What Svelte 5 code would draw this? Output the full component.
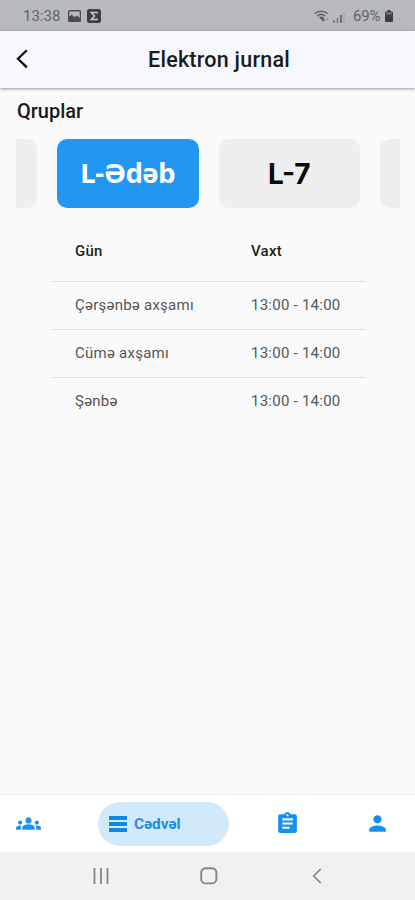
<script>
	let selected = $state('L-Ədəb');

	const groups = ['L-Ədəb', 'L-7'];

	const lessons = [
		{ day: 'Çərşənbə axşamı', time: '13:00 - 14:00' },
		{ day: 'Cümə axşamı', time: '13:00 - 14:00' },
		{ day: 'Şənbə', time: '13:00 - 14:00' }
	];
</script>

<div class="screen">
	<div class="status-bar">
		<span class="clock">13:38</span>
		<svg class="picture" width="13" height="12" viewBox="0 0 13 12">
			<path fill="#4b4c50" fill-rule="evenodd" d="M1.5 0h10A1.5 1.5 0 0 1 13 1.5v9a1.5 1.5 0 0 1-1.5 1.5h-10A1.5 1.5 0 0 1 0 10.5v-9A1.5 1.5 0 0 1 1.5 0zM1.3 1.5v5l2.500-2 2.700 2.700 2.300-1.700 2.900 2.500V1.500z" />
		</svg>
		<svg class="app-badge" width="14" height="14" viewBox="0 0 14 14">
			<rect width="14" height="14" rx="2.5" fill="#3d3e42" />
			<path d="M10 4.600V3.500H4.300L7.500 7l-3.200 3.500H10V9.400" fill="none" stroke="#c9cacd" stroke-width="1.5" />
		</svg>
		<svg class="wifi" width="16" height="13" viewBox="0 0 16 13">
			<path d="M.8 3.700C4.500.3 10 .3 13.700 3.700M3.200 6c2.500-2 5.600-2 8 0" fill="none" stroke="#626367" stroke-width="1.5" />
			<path d="M4.800 7.200c1.600-1 3.400-1 5 0l1 3-1.500 1.500z" fill="#626367" />
			<path d="M11.500 9.500 13 8l1.500 1.500L13 11z" fill="#98999d" />
		</svg>
		<svg class="signal" width="12" height="12" viewBox="0 0 12 12">
			<path d="M1 9v3M4.500 7v5" stroke="#75767a" stroke-width="1.6" />
			<path d="M8 4v8" stroke="#626367" stroke-width="1.8" />
			<path d="M11 1v11" stroke="#a5a6aa" stroke-width="1.5" />
		</svg>
		<span class="percent">69%</span>
		<svg class="battery" width="8" height="12" viewBox="0 0 8 12">
			<path fill="#3d3e42" d="M2.500 0h3v1.500H7a1 1 0 0 1 1 1V11a1 1 0 0 1-1 1H1a1 1 0 0 1-1-1V2.500a1 1 0 0 1 1-1h1.500z" />
			<path fill="#77787c" d="M1 2.500h6v2H1z" />
		</svg>
	</div>

	<header>
		<svg class="back" width="13" height="20" viewBox="0 0 13 20">
			<path d="M10.800 1.200 2 9.800l8.800 8.600" fill="none" stroke="#111" stroke-width="2.3" />
		</svg>
		<h1>Elektron jurnal</h1>
	</header>

	<main>
		<h2>Qruplar</h2>

		<div class="carousel">
			<div class="group edge left"></div>
			{#each groups as group}
				<button class="group" class:active={group === selected} onclick={() => (selected = group)}>
					{group}
				</button>
			{/each}
			<div class="group edge right"></div>
		</div>

		<div class="timetable">
			<div class="row head">
				<span class="day">Gün</span>
				<span>Vaxt</span>
			</div>
			{#each lessons as lesson}
				<div class="row">
					<span class="day">{lesson.day}</span>
					<span class="time">{lesson.time}</span>
				</div>
			{/each}
		</div>
	</main>

	<nav class="tabs">
		<div class="tab first">
			<svg width="25" height="25" viewBox="0 0 24 24" fill="#1e92ec">
				<path d="M4 13c1.100 0 2-.9 2-2s-.9-2-2-2-2 .9-2 2 .9 2 2 2zm1.130 1.100c-.37-.06-.74-.1-1.130-.1-.99 0-1.930.21-2.780.58C.48 14.900 0 15.620 0 16.430V18h4.500v-1.610c0-.83.23-1.610.63-2.290zM20 13c1.100 0 2-.9 2-2s-.9-2-2-2-2 .9-2 2 .9 2 2 2zm4 3.430c0-.81-.48-1.530-1.220-1.850-.85-.37-1.790-.58-2.780-.58-.39 0-.76.04-1.130.1.4.68.63 1.460.63 2.290V18H24v-1.570zM16.240 13.650c-1.170-.52-2.610-.9-4.240-.9-1.630 0-3.070.39-4.240.9C6.680 14.130 6 15.210 6 16.390V18h12v-1.610c0-1.180-.68-2.260-1.760-2.740zM9 9c0 1.660 1.340 3 3 3s3-1.340 3-3-1.340-3-3-3-3 1.340-3 3z" />
			</svg>
		</div>
		<div class="tab current">
			<svg width="18" height="16" viewBox="0 0 18 16" fill="#1088e6">
				<path d="M0 0h18v4H0zM0 6h18v4H0zM0 12h18v4H0z" />
			</svg>
			<span>Cədvəl</span>
		</div>
		<div class="tab third">
			<svg width="25" height="25" viewBox="0 0 24 24" fill="#1790ed">
				<path d="M19 3h-4.180C14.400 1.840 13.300 1 12 1c-1.300 0-2.400.84-2.820 2H5c-1.100 0-2 .9-2 2v14c0 1.100.9 2 2 2h14c1.100 0 2-.9 2-2V5c0-1.100-.9-2-2-2zm-7 0c.55 0 1 .45 1 1s-.45 1-1 1-1-.45-1-1 .45-1 1-1zm2 14H7v-2h7v2zm3-4H7v-2h10v2zm0-4H7V7h10v2z" />
			</svg>
		</div>
		<div class="tab fourth">
			<svg width="25" height="25" viewBox="0 0 24 24" fill="#1790ed">
				<path d="M12 12c2.210 0 4-1.790 4-4s-1.790-4-4-4-4 1.790-4 4 1.790 4 4 4zm0 2c-2.670 0-8 1.340-8 4v2h16v-2c0-2.660-5.330-4-8-4z" />
			</svg>
		</div>
	</nav>

	<div class="system-nav">
		<svg width="16" height="16" viewBox="0 0 16 16">
			<path d="M1.500 0v16M8 0v16M14.500 0v16" stroke="#858585" stroke-width="1.8" />
		</svg>
		<svg class="home" width="18" height="18" viewBox="0 0 18 18">
			<rect x="1.2" y="1.2" width="15.2" height="15.2" rx="4.5" fill="none" stroke="#858585" stroke-width="1.9" />
		</svg>
		<svg width="10" height="16" viewBox="0 0 10 16">
			<path d="M8.800 1 1.700 8l7.100 7" fill="none" stroke="#858585" stroke-width="1.7" />
		</svg>
	</div>
</div>

<style>
	:global(body) {
		margin: 0;
	}

	.screen {
		width: 415px;
		height: 900px;
		display: flex;
		flex-direction: column;
		overflow: hidden;
		background: #fafafa;
		color: #1a1a1a;
		font-family: Roboto, sans-serif;
	}

	.status-bar {
		height: 31px;
		box-sizing: border-box;
		padding: 1px 22px 0 23px;
		display: flex;
		align-items: center;
		background: #b8b9bd;
		color: #626367;
		font-size: 15px;
	}

	.clock {
		width: 45px;
	}

	.app-badge {
		margin-left: 6px;
	}

	.wifi {
		margin-left: auto;
	}

	.signal {
		margin: 2px 8px 0 3px;
	}

	.percent {
		width: 28px;
		margin-right: 4px;
		letter-spacing: -0.2px;
	}

	header {
		height: 57px;
		flex-shrink: 0;
		box-sizing: border-box;
		padding: 0 0 1px 16px;
		display: flex;
		align-items: center;
		background: #f6f8fd;
		box-shadow: 0 1px 3px rgba(0, 0, 0, 0.4);
		z-index: 1;
	}

	h1 {
		margin: 0 0 0 119px;
		font-size: 21.5px;
		font-weight: 500;
		letter-spacing: 0.25px;
	}

	main {
		flex: 1;
	}

	h2 {
		margin: 11px 0 0 17px;
		font-size: 20px;
		line-height: 25px;
		font-weight: 500;
	}

	.carousel {
		margin: 15px 15px 0 16px;
		display: flex;
		gap: 20px;
	}

	.group {
		flex: 1;
		height: 69px;
		padding: 0;
		border: none;
		border-radius: 10px;
		background: #eee;
		color: #0a0a0a;
		font-family: Inter, sans-serif;
		font-size: 28px;
		font-weight: 700;
	}

	.group.active {
		padding-bottom: 2px;
		background: #2196f3;
		color: #fff;
		font-family: "Noto Sans", sans-serif;
		font-size: 27.5px;
		letter-spacing: -0.5px;
	}

	.edge {
		flex: none;
	}

	.left {
		width: 21px;
		border-radius: 0 10px 10px 0;
	}

	.right {
		width: 20px;
		border-radius: 10px 0 0 10px;
	}

	.timetable {
		width: 314px;
		margin: 15px 0 0 52px;
	}

	.row {
		height: 48px;
		box-sizing: border-box;
		padding: 0 0 2px 23px;
		display: flex;
		align-items: center;
		border-top: 1px solid #e2e2e2;
		color: #555;
		font-size: 15px;
		letter-spacing: 0.25px;
	}

	.row.head {
		height: 58px;
		border-top: none;
		color: #222;
		font-weight: 500;
	}

	.day {
		width: 176px;
	}

	.tabs {
		height: 58px;
		border-top: 1px solid #f4f4f4;
		box-sizing: border-box;
		display: flex;
		align-items: center;
		background: #fff;
	}

	.tab {
		display: flex;
		align-items: center;
	}

	.first {
		width: 82px;
		padding-left: 16px;
	}

	.current {
		width: 131px;
		height: 44px;
		box-sizing: border-box;
		padding-left: 11px;
		gap: 7px;
		border-radius: 22px;
		background: #d2e8fb;
		color: #1c8ee9;
		font-size: 15.3px;
		font-weight: 700;
	}

	.third {
		margin-left: 46px;
	}

	.fourth {
		margin-left: 65px;
	}

	.system-nav {
		height: 48px;
		box-sizing: border-box;
		padding: 0 93px 1px;
		display: flex;
		align-items: center;
		justify-content: space-between;
		background: #f1f1f1;
	}

	.home {
		margin-right: 4px;
	}
</style>
